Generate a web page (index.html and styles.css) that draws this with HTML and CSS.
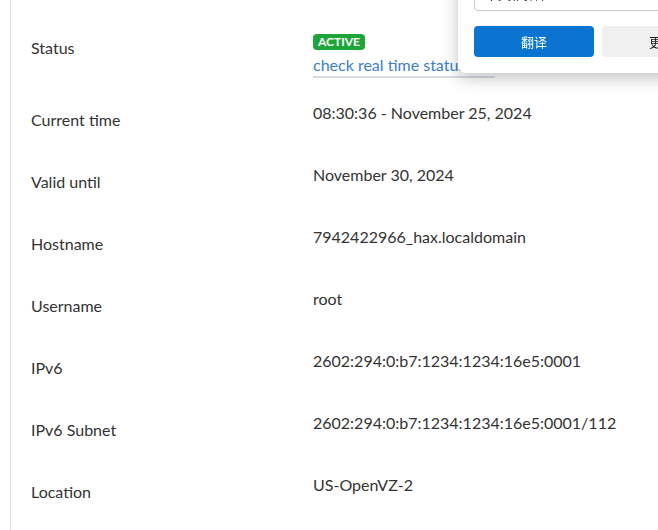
FILE: index.html
```html
<!DOCTYPE html>
<html lang="en">
<head>
    <meta charset="UTF-8">
    <meta name="viewport" content="width=device-width, initial-scale=1.0">
    <title>Service details</title>
    <link rel="stylesheet" href="styles.css">
</head>
<body>
<div class="panel">
    <div class="row row-status">
        <div class="label">Status</div>
        <div class="value">
            <span class="badge">Active</span><br>
            <a class="status-link" href="#">check real time status</a>
        </div>
    </div>
    <div class="row">
        <div class="label">Current time</div>
        <div class="value">08:30:36 - November 25, 2024</div>
    </div>
    <div class="row">
        <div class="label">Valid until</div>
        <div class="value">November 30, 2024</div>
    </div>
    <div class="row">
        <div class="label">Hostname</div>
        <div class="value">7942422966_hax.localdomain</div>
    </div>
    <div class="row">
        <div class="label">Username</div>
        <div class="value">root</div>
    </div>
    <div class="row">
        <div class="label">IPv6</div>
        <div class="value">2602:294:0:b7:1234:1234:16e5:0001</div>
    </div>
    <div class="row">
        <div class="label">IPv6 Subnet</div>
        <div class="value">2602:294:0:b7:1234:1234:16e5:0001/112</div>
    </div>
    <div class="row">
        <div class="label">Location</div>
        <div class="value">US-OpenVZ-2</div>
    </div>
</div>

<!-- browser translate popup sitting over the page -->
<div class="translate-popup">
    <div class="lang-select">中文(简体)</div>
    <div class="popup-buttons">
        <button class="btn btn-primary">翻译</button>
        <button class="btn btn-secondary">更多</button>
    </div>
</div>
</body>
</html>
```

FILE: styles.css
```css
body {
    margin: 0;
    padding: 0;
    background-color: #fff;
    font-family: Lato, "Noto Sans CJK SC", sans-serif;
    font-size: 16px;
    color: #333;
    overflow: hidden;
}

.panel {
    margin-left: 10px;
    min-height: 100vh;
    border-left: 1px solid #e3e3e3;
    padding: 31px 0 0 20px;
    box-sizing: border-box;
}

.row {
    display: grid;
    grid-template-columns: 282px 1fr;
    height: 62px;
}

.row-status {
    height: 72px;
}

.label {
    margin-top: 7px;
    line-height: 20px;
}

.value {
    line-height: 20px;
}

.badge {
    display: inline-block;
    margin-top: 3px;
    padding: 0 5px;
    height: 16px;
    line-height: 16px;
    border-radius: 4px;
    background-color: #1ea53a;
    color: #fff;
    font-size: 12px;
    font-weight: 700;
    text-transform: uppercase;
    vertical-align: top;
}

.status-link {
    display: inline-block;
    margin-top: 4px;
    padding: 0 30px 1px 0;
    color: #3a80c8;
    text-decoration: none;
    border-bottom: 2px solid #d6dde6;
}

.translate-popup {
    position: fixed;
    left: 458px;
    top: -60px;
    width: 260px;
    height: 133px;
    box-sizing: border-box;
    padding: 0 16px;
    background-color: #fff;
    border-radius: 8px;
    box-shadow: 0 5px 16px rgba(0, 0, 0, 0.24);
    font-family: "Noto Sans CJK SC", sans-serif;
}

.lang-select {
    margin-top: 36px;
    height: 35px;
    box-sizing: border-box;
    padding: 8px 10px;
    border: 1px solid #c8c8c8;
    border-radius: 4px;
    font-size: 13px;
    line-height: 18px;
    color: #222;
}

.popup-buttons {
    display: flex;
    gap: 8px;
    margin-top: 15px;
}

.btn {
    height: 31px;
    width: 120px;
    flex-shrink: 0;
    border: none;
    border-radius: 4px;
    font-family: "Noto Sans CJK SC", sans-serif;
    font-size: 13px;
    padding: 0;
}

.btn-primary {
    background-color: #0a74d0;
    color: #fff;
}

.btn-secondary {
    background-color: #f0f0f0;
    color: #222;
}
```
